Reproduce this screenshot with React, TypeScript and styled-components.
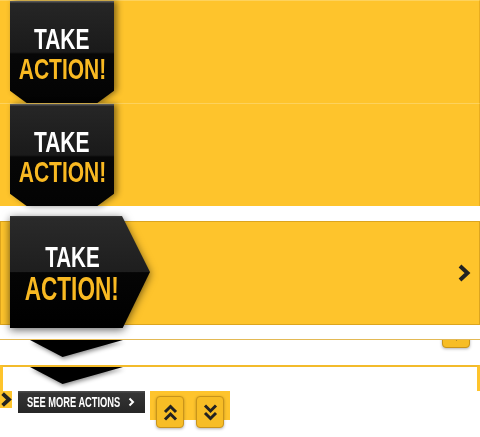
import React from "react";
import styled, { createGlobalStyle } from "styled-components";

const Global = createGlobalStyle`
  html, body { margin: 0; padding: 0; background: #fff; }
  body { width: 480px; height: 437px; overflow: hidden; }
`;

const YELLOW = "#fec42c";
const ACTION = "#f9b922";
const FONT = `"Liberation Sans", Arial, sans-serif`;

const Page = styled.div`
  width: 480px;
  display: flex;
  flex-direction: column;
`;

const Bar = styled.div<{ $h: number }>`
  position: relative;
  box-sizing: border-box;
  height: ${(p) => p.$h}px;
  display: flex;
  align-items: stretch;
  background: ${YELLOW};
  border-top: 1px solid #fdd25c;
  border-right: 1px solid #e9ad1f;
`;

const FramedBar = styled.div`
  position: relative;
  box-sizing: border-box;
  height: 104px;
  margin-top: 15px;
  display: flex;
  align-items: center;
  background: ${YELLOW};
  border: 1px solid #dca51f;
`;

const RibbonWrap = styled.div`
  margin-left: 10px;
  width: 104px;
  filter: drop-shadow(3px 0 3px rgba(0, 0, 0, 0.45));
`;

const Ribbon = styled.div`
  height: 100%;
  clip-path: polygon(0 0, 100% 0, 100% 88%, 84% 100%, 16% 100%, 0 88%);
  background: linear-gradient(
    to bottom,
    #555 0,
    #555 1px,
    #262626 2px,
    #1a1a1a 50%,
    #070707 52%,
    #030303 100%
  );
  display: flex;
  flex-direction: column;
  align-items: center;
  padding-top: 23px;
  box-sizing: border-box;
`;

const ArrowWrap = styled.div`
  position: absolute;
  left: 9px;
  top: -6px;
  width: 140px;
  height: 112px;
  filter: drop-shadow(0 2px 4px rgba(0, 0, 0, 0.6));
`;

const ArrowShape = styled.div`
  height: 100%;
  clip-path: polygon(0 0, 80% 0, 100% 50%, 80.5% 100%, 0 100%);
  background: linear-gradient(
    to bottom,
    #3a3a3a 0,
    #2a2a2a 2px,
    #1e1e1e 50%,
    #050505 50.5%,
    #000 100%
  );
  display: flex;
  flex-direction: column;
  align-items: center;
  padding: 27px 16px 0 0;
  box-sizing: border-box;
`;

const Word = styled.span<{ $size: number; $yellow?: boolean; $squeeze: number }>`
  display: block;
  font-family: ${FONT};
  font-weight: 700;
  font-size: ${(p) => p.$size}px;
  line-height: ${(p) => p.$size}px;
  color: ${(p) => (p.$yellow ? ACTION : "#fff")};
  white-space: nowrap;
  transform: scaleX(${(p) => p.$squeeze});
`;

const RightChevron = styled.svg`
  margin-left: auto;
  margin-right: 8px;
  width: 14px;
  height: 20px;
`;

const TailSection = styled.div<{ $framed?: boolean }>`
  position: relative;
  box-sizing: border-box;
  height: 26px;
  overflow: hidden;
  margin-top: ${(p) => (p.$framed ? 0 : 14)}px;
  border-top: ${(p) => (p.$framed ? "2px solid #f3bb2b" : "1px solid #e3b955")};
  border-left: ${(p) => (p.$framed ? `3px solid ${YELLOW}` : "none")};
  border-right: ${(p) => (p.$framed ? `3px solid ${YELLOW}` : "none")};
  padding-left: ${(p) => (p.$framed ? 27 : 30)}px;
`;

const TailWrap = styled.div`
  width: 93px;
  height: 17px;
  filter: drop-shadow(1px 2px 2px rgba(0, 0, 0, 0.45));
`;

const Tail = styled.div`
  width: 100%;
  height: 100%;
  background: #000;
  clip-path: polygon(0 0, 100% 0, 35% 100%);
`;

const SquareButton = styled.div<{ $w: number }>`
  box-sizing: border-box;
  width: ${(p) => p.$w}px;
  height: 32px;
  background: #f7bd25;
  border: 1px solid #c9941a;
  border-radius: 4px;
  box-shadow: 0 1px 3px rgba(0, 0, 0, 0.3);
  display: flex;
  align-items: center;
  justify-content: center;
`;

const HiddenButton = styled(SquareButton)`
  position: absolute;
  right: 10px;
  top: -24px;
`;

const BottomRow = styled.div`
  display: flex;
  align-items: flex-start;
`;

const ChevronTab = styled.div`
  width: 12px;
  height: 17px;
  background: ${YELLOW};
  display: flex;
  align-items: center;
`;

const SeeMore = styled.div`
  box-sizing: border-box;
  margin-left: 6px;
  width: 127px;
  height: 22px;
  background: linear-gradient(to bottom, #4a4a4a 0, #4a4a4a 1px, #353535 2px, #262626 100%);
  display: flex;
  align-items: center;
  padding-left: 9px;
  gap: 5px;
`;

const SeeMoreLabel = styled.span`
  display: block;
  width: 96px;
  font-family: ${FONT};
  font-weight: 700;
  font-size: 14px;
  line-height: 14px;
  color: #fff;
  white-space: nowrap;
  transform: scaleX(0.665);
  transform-origin: left center;
`;

const Tray = styled.div`
  box-sizing: border-box;
  margin-left: 5px;
  width: 80px;
  height: 29px;
  background: ${YELLOW};
  padding: 5px 0 0 6px;
  display: flex;
  gap: 12px;
`;

const Chevron = ({ color = "#222", w = 14, h = 20, sw = 4 }: { color?: string; w?: number; h?: number; sw?: number }) => (
  <svg width={w} height={h} viewBox="0 0 14 20">
    <path d="M3 3 L10.5 10 L3 17" fill="none" stroke={color} strokeWidth={sw} strokeLinejoin="miter" />
  </svg>
);

const DoubleChevron = ({ dir }: { dir: "up" | "down" }) => (
  <svg width="15" height="19" viewBox="0 0 15 19" style={{ transform: dir === "down" ? "scaleY(-1)" : undefined }}>
    <path d="M2 9 L7.5 3.5 L13 9 M2 16.5 L7.5 11 L13 16.5" fill="none" stroke="#222" strokeWidth="3" />
  </svg>
);

const RibbonBanner = () => (
  <RibbonWrap>
    <Ribbon>
      <Word $size={30} $squeeze={0.7}>TAKE</Word>
      <Word $size={30} $squeeze={0.7} $yellow>ACTION!</Word>
    </Ribbon>
  </RibbonWrap>
);

export default function App() {
  return (
    <Page>
      <Global />
      <Bar $h={103}>
        <RibbonBanner />
      </Bar>
      <Bar $h={103}>
        <RibbonBanner />
      </Bar>
      <FramedBar>
        <ArrowWrap>
          <ArrowShape>
            <Word $size={29} $squeeze={0.71}>TAKE</Word>
            <Word $size={33} $squeeze={0.685} $yellow>ACTION!</Word>
          </ArrowShape>
        </ArrowWrap>
        <RightChevron viewBox="0 0 14 20">
          <path d="M3 3 L10.5 10 L3 17" fill="none" stroke="#222" strokeWidth="4" />
        </RightChevron>
      </FramedBar>
      <TailSection>
        <TailWrap>
          <Tail />
        </TailWrap>
        <HiddenButton $w={28}>
          <DoubleChevron dir="down" />
        </HiddenButton>
      </TailSection>
      <TailSection $framed>
        <TailWrap>
          <Tail />
        </TailWrap>
      </TailSection>
      <BottomRow>
        <ChevronTab>
          <Chevron w={12} h={17} sw={4.5} />
        </ChevronTab>
        <SeeMore>
          <SeeMoreLabel>SEE MORE ACTIONS</SeeMoreLabel>
          <svg width="7" height="10" viewBox="0 0 7 10">
            <path d="M1.5 1.5 L5 5 L1.5 8.5" fill="none" stroke="#fff" strokeWidth="2" />
          </svg>
        </SeeMore>
        <Tray>
          <SquareButton $w={28}>
            <DoubleChevron dir="up" />
          </SquareButton>
          <SquareButton $w={28}>
            <DoubleChevron dir="down" />
          </SquareButton>
        </Tray>
      </BottomRow>
    </Page>
  );
}
